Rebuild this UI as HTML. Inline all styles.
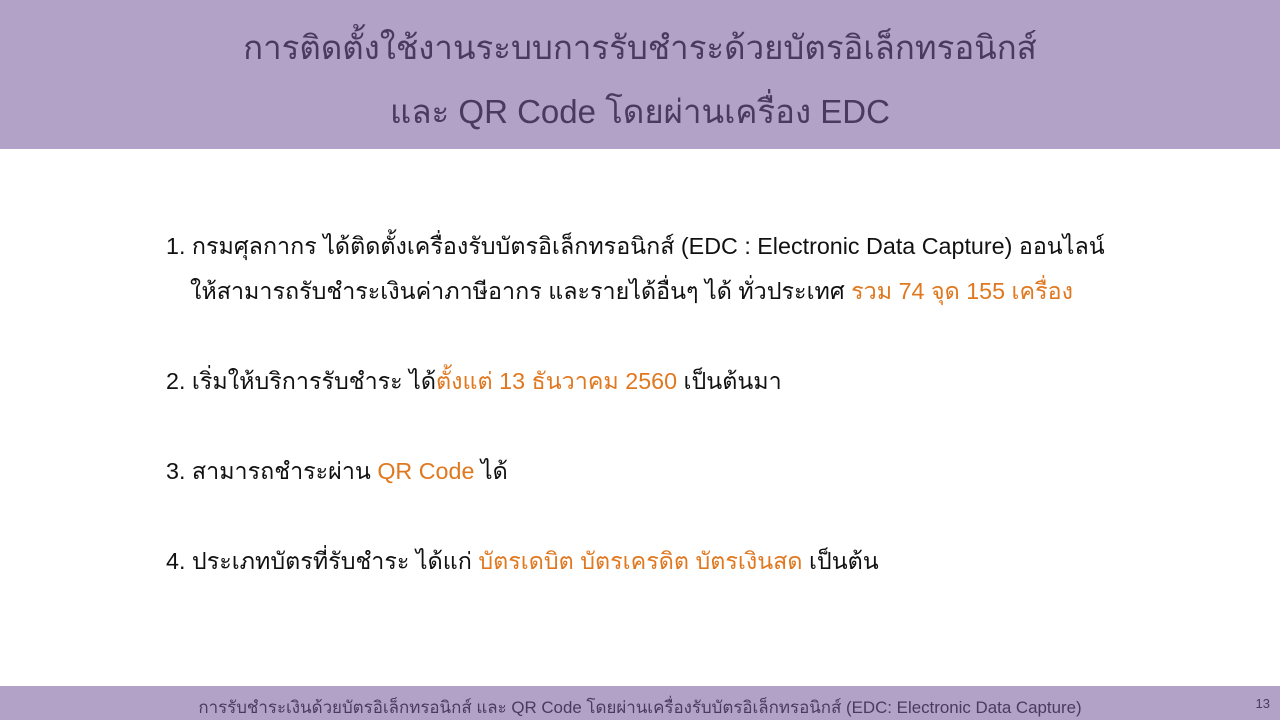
<!DOCTYPE html>
<html><head><meta charset="utf-8"><style>
html,body{margin:0;padding:0;width:1280px;height:720px;overflow:hidden;background:#fff;font-family:"Liberation Sans","DejaVu Sans",sans-serif;}
.hd{position:absolute;left:0;top:0;width:1280px;height:149px;background:#b3a2c8;color:#4a3a5e;text-align:center;font-size:33px;}
.hd .l1{position:absolute;top:25px;left:0;width:1280px;line-height:46px;}
.hd .l2{position:absolute;top:89px;left:0;width:1280px;line-height:46px;}
.b{position:absolute;left:166px;font-size:23.3px;color:#111;line-height:32px;white-space:nowrap;}
.o{color:#e07820;}
.ft{position:absolute;left:0;top:686px;width:1280px;height:34px;background:#b3a2c8;color:#4a3a5e;font-size:16.9px;}
.ft .t{position:absolute;left:0;width:1280px;text-align:center;top:9px;}
.ft .n{position:absolute;right:10px;top:10px;font-size:13px;}
</style></head><body>
<div class="hd"><div class="l1">การติดตั้งใช้งานระบบการรับชำระด้วยบัตรอิเล็กทรอนิกส์</div><div class="l2">และ QR Code โดยผ่านเครื่อง EDC</div></div>
<div class="b" style="top:230px">1. กรมศุลกากร ได้ติดตั้งเครื่องรับบัตรอิเล็กทรอนิกส์ (EDC : Electronic Data Capture) ออนไลน์</div>
<div class="b" style="top:275px;left:190px">ให้สามารถรับชำระเงินค่าภาษีอากร และรายได้อื่นๆ ได้ ทั่วประเทศ <span class="o">รวม 74 จุด 155 เครื่อง</span></div>
<div class="b" style="top:365px">2. เริ่มให้บริการรับชำระ ได้<span class="o">ตั้งแต่ 13 ธันวาคม 2560</span> เป็นต้นมา</div>
<div class="b" style="top:455px">3. สามารถชำระผ่าน <span class="o">QR Code</span> ได้</div>
<div class="b" style="top:545px">4. ประเภทบัตรที่รับชำระ ได้แก่ <span class="o">บัตรเดบิต บัตรเครดิต บัตรเงินสด</span> เป็นต้น</div>
<div class="ft"><div class="t">การรับชำระเงินด้วยบัตรอิเล็กทรอนิกส์ และ QR Code โดยผ่านเครื่องรับบัตรอิเล็กทรอนิกส์ (EDC: Electronic Data Capture)</div><div class="n">13</div></div>
</body></html>
